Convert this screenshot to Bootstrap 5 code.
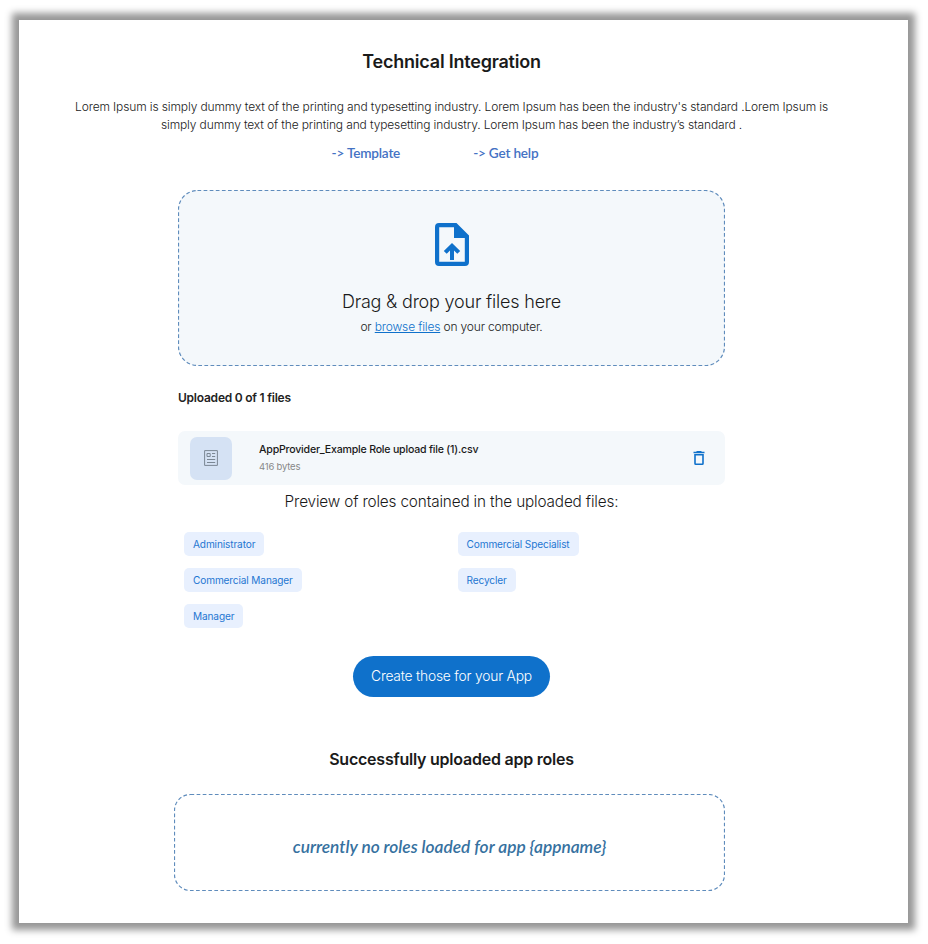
<!DOCTYPE html>
<html lang="en">
<head>
<meta charset="utf-8">
<meta name="viewport" content="width=device-width, initial-scale=1">
<title>Technical Integration</title>
<link href="https://cdn.jsdelivr.net/npm/bootstrap@5.3.0/dist/css/bootstrap.min.css" rel="stylesheet">
<style>
  body { font-family: Inter, "Liberation Sans", sans-serif; color: #1a1a1a; background: #fff; overflow: hidden; }
  .frame { margin: 20px 20px 21px 19px; height: 903px; padding-right: 24px; background: #fff; box-shadow: 0 0 7px 7px #979797; }
  .frame > * { flex-shrink: 0; }
  .page-title { margin-top: 29px; font-size: 18px; line-height: 26px; font-weight: 600; letter-spacing: -.22px; }
  .intro { margin-top: 23px; font-size: 12px; line-height: 18px; font-weight: 300; letter-spacing: -.125px; }
  .helper { margin-top: 10px; padding-right: 33px; gap: 73px; font: 600 13.6px/18px Lato, sans-serif; letter-spacing: -.2px; }
  .helper a { color: #4472c4; }
  .outline { position: absolute; inset: 0; width: 100%; height: 100%; pointer-events: none; }
  .outline rect { fill: none; stroke: #5f8cbc; stroke-width: 1.2; stroke-dasharray: 3.7 2.4; width: calc(100% - 1px); height: calc(100% - 1px); }
  .dropzone { margin-top: 28px; width: 547px; height: 176px; border-radius: 20px; background: #f4f8fb; padding-top: 33px; }
  .drop-title { margin-top: 23px; font-size: 18px; line-height: 26px; font-weight: 300; letter-spacing: -.2px; }
  .drop-sub { margin-top: 3px; font-size: 12px; line-height: 18px; font-weight: 300; letter-spacing: -.16px; }
  .drop-sub a { color: #0f71cb; }
  .uploaded { width: 547px; margin-top: 23px; font-size: 12px; line-height: 18px; font-weight: 600; letter-spacing: -.23px; color: #222; }
  .file-row { width: 547px; height: 54px; margin-top: 24px; padding: 0 20px 0 12px; border-radius: 7px; background: #f4f8fb; }
  .thumb { width: 42px; height: 43px; border-radius: 7px; background: #d5e2f4; margin-right: 27px; }
  .file-name { font-size: 10.6px; line-height: 16px; font-weight: 500; letter-spacing: -.21px; }
  .file-size { font-size: 9.5px; line-height: 17px; letter-spacing: -.2px; color: #888; }
  .preview { margin-top: 6px; font-size: 15.3px; line-height: 22px; font-weight: 300; letter-spacing: -.15px; }
  .roles { width: 547px; margin-top: 19px; padding-left: 6px; display: grid; grid-template-columns: 273.5px 1fr; row-gap: 12px; justify-items: start; }
  .chip { height: 24px; padding: 0 9px; border-radius: 5px; background: #e8f0fe; color: #1f77d2; font-size: 10.1px; line-height: 24px; letter-spacing: -.13px; }
  .create { margin-top: 28px; width: 197px; height: 41px; padding: 0; border: 0; border-radius: 21px; background: #0f71cb; color: #fff; font-size: 13.8px; font-weight: 300; letter-spacing: -.19px; }
  .done-title { margin-top: 50px; font-size: 16px; line-height: 24px; font-weight: 600; letter-spacing: -.23px; }
  .empty { width: 551px; height: 97px; margin-top: 23px; margin-right: 4px; padding-top: 8px; font: italic 600 17.3px/24px Lato, sans-serif; color: #36719f; }
</style>
<script src="https://cdn.jsdelivr.net/npm/bootstrap@5.3.0/dist/js/bootstrap.bundle.min.js"></script>
</head>
<body>
<main class="frame d-flex flex-column align-items-center text-nowrap">
  <h1 class="page-title mb-0">Technical Integration</h1>
  <p class="intro mb-0 text-center">Lorem Ipsum is simply dummy text of the printing and typesetting industry. Lorem Ipsum has been the industry's standard .Lorem Ipsum is<br>simply dummy text of the printing and typesetting industry. Lorem Ipsum has been the industry’s standard .</p>
  <nav class="helper d-flex justify-content-center">
    <a class="text-decoration-none" href="#">-&gt; Template</a>
    <a class="text-decoration-none" href="#">-&gt; Get help</a>
  </nav>

  <section class="dropzone position-relative d-flex flex-column align-items-center">
    <svg class="outline"><rect x=".5" y=".5" rx="19"/></svg>
    <svg width="34" height="43" viewBox="0 0 34 43" fill="#0f71cb">
      <path fill-rule="evenodd" d="M4 0H21.5L34 12.5V39a4 4 0 0 1-4 4H4a4 4 0 0 1-4-4V4a4 4 0 0 1 4-4ZM4.200 4.200V38.800H29.800V15H19V4.200Z"/>
      <path d="M17 20 25.200 28 22.300 30.800 19 27.600V37H15V27.600L11.700 30.800 8.800 28Z"/>
    </svg>
    <div class="drop-title">Drag &amp; drop your files here</div>
    <div class="drop-sub">or <a href="#">browse files</a> on your computer.</div>
  </section>

  <div class="uploaded">Uploaded 0 of 1 files</div>
  <section class="file-row d-flex align-items-center">
    <div class="thumb d-flex align-items-center justify-content-center">
      <svg width="14" height="16" viewBox="0 0 14 16" fill="none" stroke="#7b8794">
        <path d="M.6.600H13.400V15.400H.6Z"/><path d="M3 3.500H6.200V6.500H3ZM8 3.500H11.200M8 6.500H11.200M3 9.500H11.200M3 12.500H11.200"/>
      </svg>
    </div>
    <div class="flex-grow-1">
      <div class="file-name">AppProvider_Example Role upload file (1).csv</div>
      <div class="file-size">416 bytes</div>
    </div>
    <svg width="12" height="14" viewBox="0 0 12 14" fill="#0f71cb">
      <path fill-rule="evenodd" d="M3.500 0H8.500V.7H11.500V2.200H.5V.7H3.500ZM1.200 3H10.800V12.500a1.500 1.500 0 0 1-1.500 1.500H2.700a1.500 1.500 0 0 1-1.500-1.500ZM2.800 4.500V12.500H9.200V4.500Z"/>
    </svg>
  </section>

  <div class="preview">Preview of roles contained in the uploaded files:</div>
  <section class="roles">
    <span class="chip">Administrator</span>
    <span class="chip">Commercial Specialist</span>
    <span class="chip">Commercial Manager</span>
    <span class="chip">Recycler</span>
    <span class="chip">Manager</span>
  </section>
  <button type="button" class="create btn">Create those for your App</button>

  <h2 class="done-title mb-0">Successfully uploaded app roles</h2>
  <section class="empty position-relative d-flex align-items-center justify-content-center">
    <svg class="outline"><rect x=".5" y=".5" rx="16"/></svg>
    <span>currently no roles loaded for app {appname}</span>
  </section>
</main>
</body>
</html>
